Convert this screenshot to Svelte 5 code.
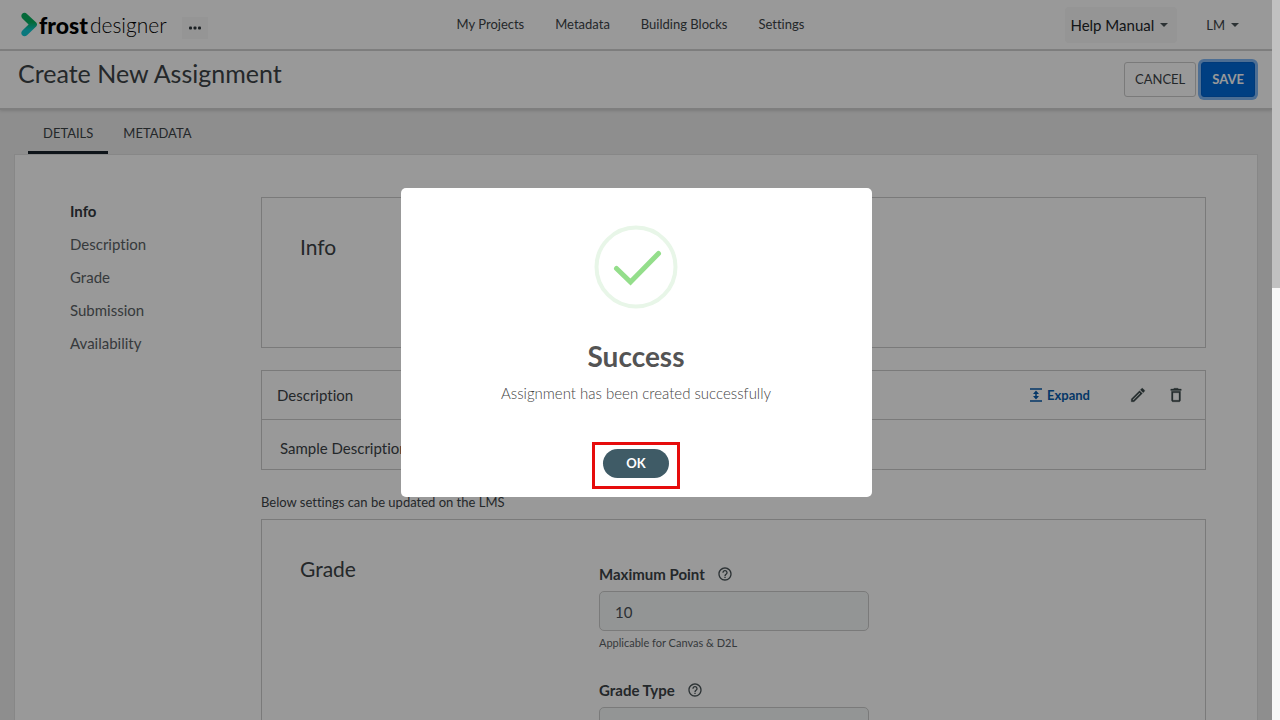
<script lang="ts">
    const navLinks = ['My Projects', 'Metadata', 'Building Blocks', 'Settings'];
    const tabs = ['DETAILS', 'METADATA'];
    const sections = ['Info', 'Description', 'Grade', 'Submission', 'Availability'];

    let activeTab = $state('DETAILS');
    let activeSection = $state('Info');
    let isDialogOpen = $state(true);
    let points = $state('10');
    let gradeType = $state('');
</script>

{#snippet helpIcon()}
    <svg class="help-icon" viewBox="0 0 24 24" aria-hidden="true">
        <path
            d="M11 18h2v-2h-2v2zm1-16C6.48 2 2 6.48 2 12s4.48 10 10 10 10-4.48 10-10S17.52 2 12 2zm0 18c-4.41 0-8-3.59-8-8s3.59-8 8-8 8 3.59 8 8-3.59 8-8 8zm0-14c-2.21 0-4 1.79-4 4h2c0-1.1.9-2 2-2s2 .9 2 2c0 2-3 1.75-3 5h2c0-2.25 3-2.5 3-5 0-2.21-1.79-4-4-4z"
        />
    </svg>
{/snippet}

<div class="window">
    <div class="page">
        <header class="topbar">
            <div class="brand">
                <a class="logo" href="#home">
                    <svg class="logo-mark" viewBox="0 0 17 25" aria-hidden="true">
                        <defs>
                            <linearGradient id="mark" x1="0" y1="0" x2="0" y2="1">
                                <stop offset="0.4" stop-color="#08b060" />
                                <stop offset="0.75" stop-color="#10c8d0" />
                            </linearGradient>
                        </defs>
                        <path
                            d="M1.2 1.8C2.6.4 4.7.6 6 1.9l9.2 8.7c1.1 1.1 1.1 2.7 0 3.8L6 23.2c-1.3 1.3-3.4 1.5-4.8.1-1.3-1.4-1.2-3.4.2-4.8l6.200-6-6.200-5.900C0 5.200 0 3.200 1.200 1.800z"
                            fill="url(#mark)"
                        />
                    </svg>
                    <span class="logo-frost">frost</span>
                    <span class="logo-designer">designer</span>
                </a>
                <button class="more" aria-label="More">
                    <svg viewBox="0 0 12 4" aria-hidden="true">
                        <rect x="0" y="0.5" width="3" height="3" rx="1" />
                        <rect x="4.5" y="0.5" width="3" height="3" rx="1" />
                        <rect x="9" y="0.5" width="3" height="3" rx="1" />
                    </svg>
                </button>
            </div>
            <nav class="main-nav">
                {#each navLinks as link}
                    <a href="#nav">{link}</a>
                {/each}
            </nav>
            <div class="account">
                <button class="help">Help Manual <span class="caret"></span></button>
                <button class="user">LM <span class="caret"></span></button>
            </div>
        </header>

        <div class="titlebar">
            <h1>Create New Assignment</h1>
            <div class="actions">
                <button class="cancel">CANCEL</button>
                <button class="save">SAVE</button>
            </div>
        </div>

        <div class="tabs" role="tablist">
            {#each tabs as tab}
                <button
                    class="tab"
                    class:active={tab === activeTab}
                    role="tab"
                    aria-selected={tab === activeTab}
                    onclick={() => (activeTab = tab)}>{tab}</button
                >
            {/each}
        </div>

        <main class="card">
            <nav class="side">
                {#each sections as section}
                    <a
                        href="#section"
                        class:active={section === activeSection}
                        onclick={() => (activeSection = section)}>{section}</a
                    >
                {/each}
            </nav>
            <div class="content">
                <section class="box info">
                    <h2>Info</h2>
                </section>

                <section class="box">
                    <div class="desc-head">
                        <h3>Description</h3>
                        <button class="expand">
                            <svg viewBox="0 0 12 14" aria-hidden="true">
                                <path d="M0 1h12M0 13h12M6 4v6" />
                                <path class="solid" d="M6 2.500L9 6H3zM6 11.500L9 8H3z" />
                            </svg>
                            Expand
                        </button>
                        <button class="icon" aria-label="Edit">
                            <svg viewBox="0 0 24 24" aria-hidden="true">
                                <path
                                    d="M14.06 9.02l.92.92L5.92 19H5v-.92l9.06-9.06M17.66 3c-.25 0-.51.1-.7.29l-1.83 1.83 3.75 3.75 1.83-1.83c.39-.39.39-1.02 0-1.41l-2.34-2.34c-.2-.2-.45-.29-.71-.29zm-3.6 3.19L3 17.25V21h3.75L17.81 9.94l-3.75-3.75z"
                                />
                            </svg>
                        </button>
                        <button class="icon" aria-label="Delete">
                            <svg viewBox="0 0 24 24" aria-hidden="true">
                                <path
                                    d="M6 19c0 1.1.9 2 2 2h8c1.1 0 2-.9 2-2V7H6v12zM8 9h8v10H8V9zm7.5-5l-1-1h-5l-1 1H5v2h14V4h-3.5z"
                                />
                            </svg>
                        </button>
                    </div>
                    <p class="desc-body">Sample Description</p>
                </section>

                <p class="note">Below settings can be updated on the LMS</p>

                <section class="box grade">
                    <h2>Grade</h2>
                    <div class="fields">
                        <div class="field">
                            <label for="points">Maximum Point {@render helpIcon()}</label>
                            <input id="points" type="text" bind:value={points} />
                            <small>Applicable for Canvas &amp; D2L</small>
                        </div>
                        <div class="field">
                            <label for="grade-type">Grade Type {@render helpIcon()}</label>
                            <input id="grade-type" type="text" bind:value={gradeType} />
                        </div>
                    </div>
                </section>
            </div>
        </main>

        {#if isDialogOpen}
            <div class="overlay">
                <div class="dialog" role="dialog" aria-modal="true" aria-labelledby="dialog-title">
                    <svg class="check" viewBox="0 0 84 84" aria-hidden="true">
                        <circle cx="42" cy="42" r="39.5" />
                        <path d="M22.5 43.5l14 13.500 28-28.500" />
                    </svg>
                    <h2 id="dialog-title">Success</h2>
                    <p>Assignment has been created successfully</p>
                    <div class="highlight">
                        <button class="ok" onclick={() => (isDialogOpen = false)}>OK</button>
                    </div>
                </div>
            </div>
        {/if}
    </div>
    <div class="scrollbar"><div class="thumb"></div></div>
</div>

<style>
    :global(body) {
        font-family: Lato, 'Liberation Sans', sans-serif;
        font-variant-ligatures: none;
        color: #3c4347;
    }

    .window {
        display: grid;
        grid-template-columns: 1fr 8px;
        height: 100vh;
        overflow: hidden;
    }

    .page {
        position: relative;
        overflow: hidden;
        background: #ededed;
    }

    .window * {
        box-sizing: border-box;
    }

    h1,
    h2,
    h3,
    p {
        margin: 0;
        font-weight: 400;
    }

    button {
        font-family: inherit;
        color: inherit;
        border: 0;
        background: none;
        padding: 0;
        cursor: pointer;
    }

    a {
        color: inherit;
        text-decoration: none;
    }

    .topbar {
        display: grid;
        grid-template-columns: 1fr auto 1fr;
        align-items: center;
        height: 51px;
        padding: 0 24px 0 21px;
        background: #fff;
        border-bottom: 2px solid #d2d2d2;
    }

    .brand,
    .logo {
        display: flex;
        align-items: center;
    }

    .brand {
        gap: 15px;
    }

    .logo {
        color: #000;
        line-height: 28px;
    }

    .logo-mark {
        width: 17px;
        height: 25px;
    }

    .logo-frost {
        margin-left: 1px;
        font-size: 23px;
        font-weight: 900;
    }

    .logo-designer {
        margin-left: 2px;
        font-size: 21px;
        font-weight: 300;
    }

    .more {
        display: grid;
        place-items: center;
        width: 26px;
        height: 22px;
        margin-top: 6px;
        background: #f8f8f8;
    }

    .more svg {
        width: 12px;
        height: 4px;
        fill: #30383d;
    }

    .main-nav {
        display: flex;
        gap: 31px;
        padding: 0 8px 2px 0;
        font-size: 13px;
    }

    .account {
        display: flex;
        align-items: center;
        justify-content: flex-end;
        gap: 20px;
    }

    .help,
    .user {
        display: flex;
        align-items: center;
        gap: 6px;
        padding: 0 9px;
    }

    .help {
        height: 36px;
        padding: 0 9px 0 5px;
        border-radius: 4px;
        background: #f8f8f8;
        font-size: 15px;
        color: #212529;
    }

    .user {
        font-size: 13px;
    }

    .caret {
        border: 4px solid transparent;
        border-top-color: #4a5458;
        border-bottom: 0;
    }

    .titlebar {
        display: flex;
        justify-content: space-between;
        align-items: flex-start;
        height: 59px;
        padding: 7px 17px 0 18px;
        background: #fff;
        border-bottom: 2px solid #d2d2d2;
        box-shadow: 0 1px 3px #ccc;
    }

    h1 {
        font-size: 25px;
        line-height: 30px;
    }

    .actions {
        display: flex;
        gap: 5px;
        padding-top: 4px;
    }

    .cancel,
    .save {
        height: 35px;
        padding: 0 10px 2px;
        border: 1px solid #ccc;
        border-radius: 3px;
        font-size: 13px;
    }

    .save {
        border-color: #0062cc;
        background: #0069d9;
        box-shadow: 0 0 0 3px #80b8f5;
        color: #fff;
        font-weight: 700;
    }

    .tabs {
        display: flex;
        height: 44px;
        padding-left: 28px;
    }

    .tab {
        padding: 4px 15px 0;
        border-bottom: 3px solid transparent;
        font-size: 13px;
    }

    .tab.active {
        border-color: #18222a;
    }

    .card {
        display: grid;
        grid-template-columns: 191px 1fr;
        margin: 0 14px;
        padding: 42px 51px 0 55px;
        border: 1px solid #e2e2e2;
        background: #fff;
    }

    .side {
        display: flex;
        flex-direction: column;
        gap: 13px;
        padding-top: 4px;
        font-size: 15px;
        line-height: 20px;
        color: #5b6266;
    }

    .side .active {
        font-weight: 700;
        color: #333a40;
    }

    .box {
        border: 1px solid #ccc;
    }

    .box h2 {
        padding-left: 38px;
        font-size: 21px;
        line-height: 24px;
    }

    .info {
        height: 151px;
        margin-bottom: 22px;
        padding-top: 37px;
    }

    .desc-head {
        display: flex;
        align-items: center;
        height: 49px;
        padding: 0 20px 0 15px;
        border-bottom: 1px solid #ccc;
    }

    h3 {
        flex: 1;
        font-size: 15px;
    }

    .expand {
        display: flex;
        align-items: center;
        gap: 5px;
        margin-right: 39px;
        color: #085cad;
        font-size: 13px;
        font-weight: 700;
    }

    .expand svg {
        width: 12px;
        height: 14px;
        fill: none;
        stroke: currentColor;
        stroke-width: 1.5;
    }

    .expand .solid {
        fill: currentColor;
        stroke: none;
    }

    .icon {
        width: 18px;
        height: 18px;
    }

    .icon + .icon {
        margin-left: 20px;
    }

    .icon svg {
        display: block;
        width: 18px;
        height: 18px;
        fill: #3c4a4c;
        stroke: #3c4a4c;
        stroke-width: 0.4;
    }

    .desc-body {
        padding: 18px 18px 11px;
        font-size: 15px;
        line-height: 20px;
    }

    .note {
        padding: 23px 0 8px;
        font-size: 13px;
        line-height: 18px;
    }

    .grade {
        display: grid;
        grid-template-columns: 337px 270px;
        height: 400px;
        padding-top: 37px;
    }

    .fields {
        display: grid;
        align-content: start;
        gap: 28px;
        padding-top: 7px;
    }

    .field {
        display: grid;
    }

    label {
        display: flex;
        align-items: center;
        gap: 12px;
        margin-bottom: 7px;
        font-size: 15px;
        font-weight: 700;
        line-height: 20px;
    }

    .help-icon {
        width: 16px;
        height: 16px;
        fill: #4a5458;
    }

    input {
        width: 100%;
        height: 40px;
        padding: 1px 15px 0;
        border: 1px solid #ccc;
        border-radius: 5px;
        background: #f5f9f8;
        color: #495057;
        font-family: inherit;
        font-size: 15px;
    }

    small {
        margin-top: 3px;
        font-size: 11px;
        line-height: 18px;
        color: #5b6266;
    }

    .overlay {
        position: absolute;
        inset: 0;
        display: flex;
        justify-content: center;
        align-items: flex-start;
        padding-top: 188px;
        background: rgba(0, 0, 0, 0.4);
    }

    .dialog {
        display: flex;
        flex-direction: column;
        align-items: center;
        width: 471px;
        padding: 37px 16px 8px;
        border-radius: 5px;
        background: #fff;
        color: #545454;
    }

    .check {
        width: 84px;
        height: 84px;
        fill: none;
    }

    .check circle {
        stroke: #e8f6e8;
        stroke-width: 4;
    }

    .check path {
        stroke: #94de8b;
        stroke-width: 5;
        stroke-linecap: round;
    }

    .dialog h2 {
        margin-top: 29px;
        font-size: 28px;
        font-weight: 700;
        line-height: 36px;
    }

    .dialog p {
        margin-top: 8px;
        font-size: 15px;
        font-weight: 300;
        line-height: 22px;
        color: #444;
    }

    .highlight {
        margin-top: 38px;
        padding: 4px 8px 8px;
        border: 3px solid #e60c0c;
    }

    .ok {
        display: block;
        width: 66px;
        height: 29px;
        padding-bottom: 2px;
        border-radius: 15px;
        background: #3f5b66;
        color: #fff;
        font-size: 13px;
        font-weight: 700;
    }

    .scrollbar {
        background: #f8f8f8;
    }

    .thumb {
        height: 40%;
        background: #c1c1c1;
    }
</style>
